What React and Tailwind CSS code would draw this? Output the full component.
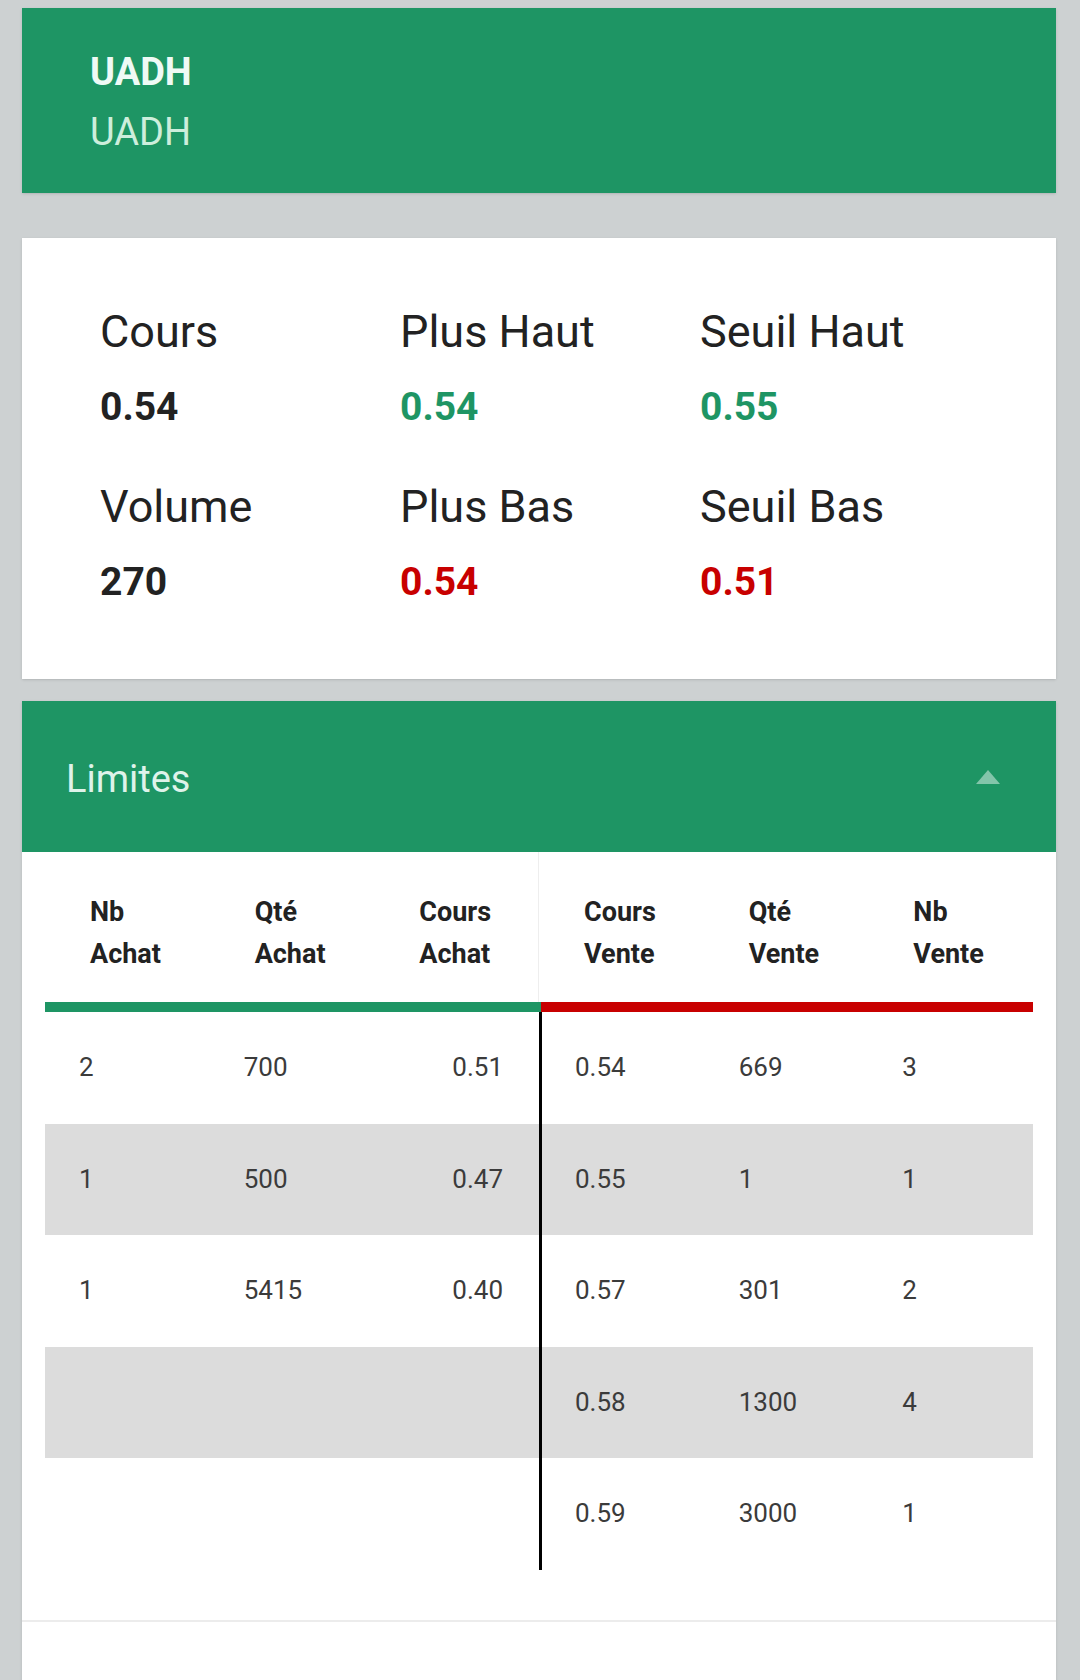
import React from 'react';

const stats = [
  { label: 'Cours', value: '0.54', color: 'text-[#222222]' },
  { label: 'Plus Haut', value: '0.54', color: 'text-[#1e9564]' },
  { label: 'Seuil Haut', value: '0.55', color: 'text-[#1e9564]' },
  { label: 'Volume', value: '270', color: 'text-[#222222]' },
  { label: 'Plus Bas', value: '0.54', color: 'text-[#c80000]' },
  { label: 'Seuil Bas', value: '0.51', color: 'text-[#c80000]' },
];

const headers = [
  ['Nb', 'Achat'],
  ['Qté', 'Achat'],
  ['Cours', 'Achat'],
  ['Cours', 'Vente'],
  ['Qté', 'Vente'],
  ['Nb', 'Vente'],
];

const rows = [
  { achat: ['2', '700', '0.51'], vente: ['0.54', '669', '3'] },
  { achat: ['1', '500', '0.47'], vente: ['0.55', '1', '1'] },
  { achat: ['1', '5415', '0.40'], vente: ['0.57', '301', '2'] },
  { achat: ['', '', ''], vente: ['0.58', '1300', '4'] },
  { achat: ['', '', ''], vente: ['0.59', '3000', '1'] },
];

const StatsCard = () => (
  <div className="mt-[45px] bg-white pl-[78px] pt-[68px] pb-[74px] shadow-sm">
    <div className="grid grid-cols-[300px_300px_300px] gap-y-[51px]">
      {stats.map((s) => (
        <div key={s.label}>
          <div className="text-[45px] leading-[52px] text-[#222222]">{s.label}</div>
          <div className={`mt-[26px] text-[39px] leading-[46px] font-bold ${s.color}`}>{s.value}</div>
        </div>
      ))}
    </div>
  </div>
);

const LimitesTable = () => (
  <div className="mt-[22px] shadow-sm">
    <div className="flex h-[151px] items-center justify-between bg-[#1e9564] pl-[44px] pr-[56px]">
      <span className="pt-[6px] text-[38px] text-[#def3ea]">Limites</span>
      <svg width="24" height="14" viewBox="0 0 24 14">
        <path d="M12 0 L24 14 H0 Z" fill="#ffffff" fillOpacity="0.45" />
      </svg>
    </div>

    <div className="bg-white">
      <div className="mx-[23px]">
        <div className="grid grid-cols-6">
          {headers.map(([a, b], i) => (
            <div
              key={i}
              className={`pt-[39px] pb-[27px] pl-[45px] text-[27px] leading-[42px] font-bold text-[#222222] ${
                i === 2 ? 'border-r border-[#eeeeee]' : ''
              }`}
            >
              <div>{a}</div>
              <div>{b}</div>
            </div>
          ))}
        </div>

        <div className="flex h-[10px]">
          <div className="w-[496px] bg-[#1e9564]"></div>
          <div className="flex-1 bg-[#c80000]"></div>
        </div>

        {rows.map((r, i) => (
          <div
            key={i}
            className={`flex h-[111.5px] text-[26px] text-[#3b3b3b] ${i % 2 === 1 ? 'bg-[#dcdcdc]' : ''}`}
          >
            <div className="grid w-[497px] grid-cols-3 items-center border-r-[3px] border-black">
              <div className="pl-[34px]">{r.achat[0]}</div>
              <div className="pl-[34px]">{r.achat[1]}</div>
              <div className="pr-[36px] text-right">{r.achat[2]}</div>
            </div>
            <div className="grid flex-1 grid-cols-3 items-center">
              {r.vente.map((v, j) => (
                <div key={j} className="pl-[33px]">{v}</div>
              ))}
            </div>
          </div>
        ))}
      </div>

      <div className="mt-[50px] h-[2px] bg-[#ececec]"></div>
      <div className="h-[80px]"></div>
    </div>
  </div>
);

export default function App() {
  return (
    <div className="min-h-[1680px] overflow-hidden bg-[#cdd1d2] pl-[22px] pr-[24px] pt-[8px] font-['Roboto',sans-serif]">
      <div className="bg-[#1e9564] pl-[68px] pt-[34px] pb-[31px] text-[38px] leading-[60px] shadow-sm">
        <div className="font-bold text-[#effaf5]">UADH</div>
        <div className="text-[#cdeedc]">UADH</div>
      </div>
      <StatsCard />
      <LimitesTable />
    </div>
  );
}
